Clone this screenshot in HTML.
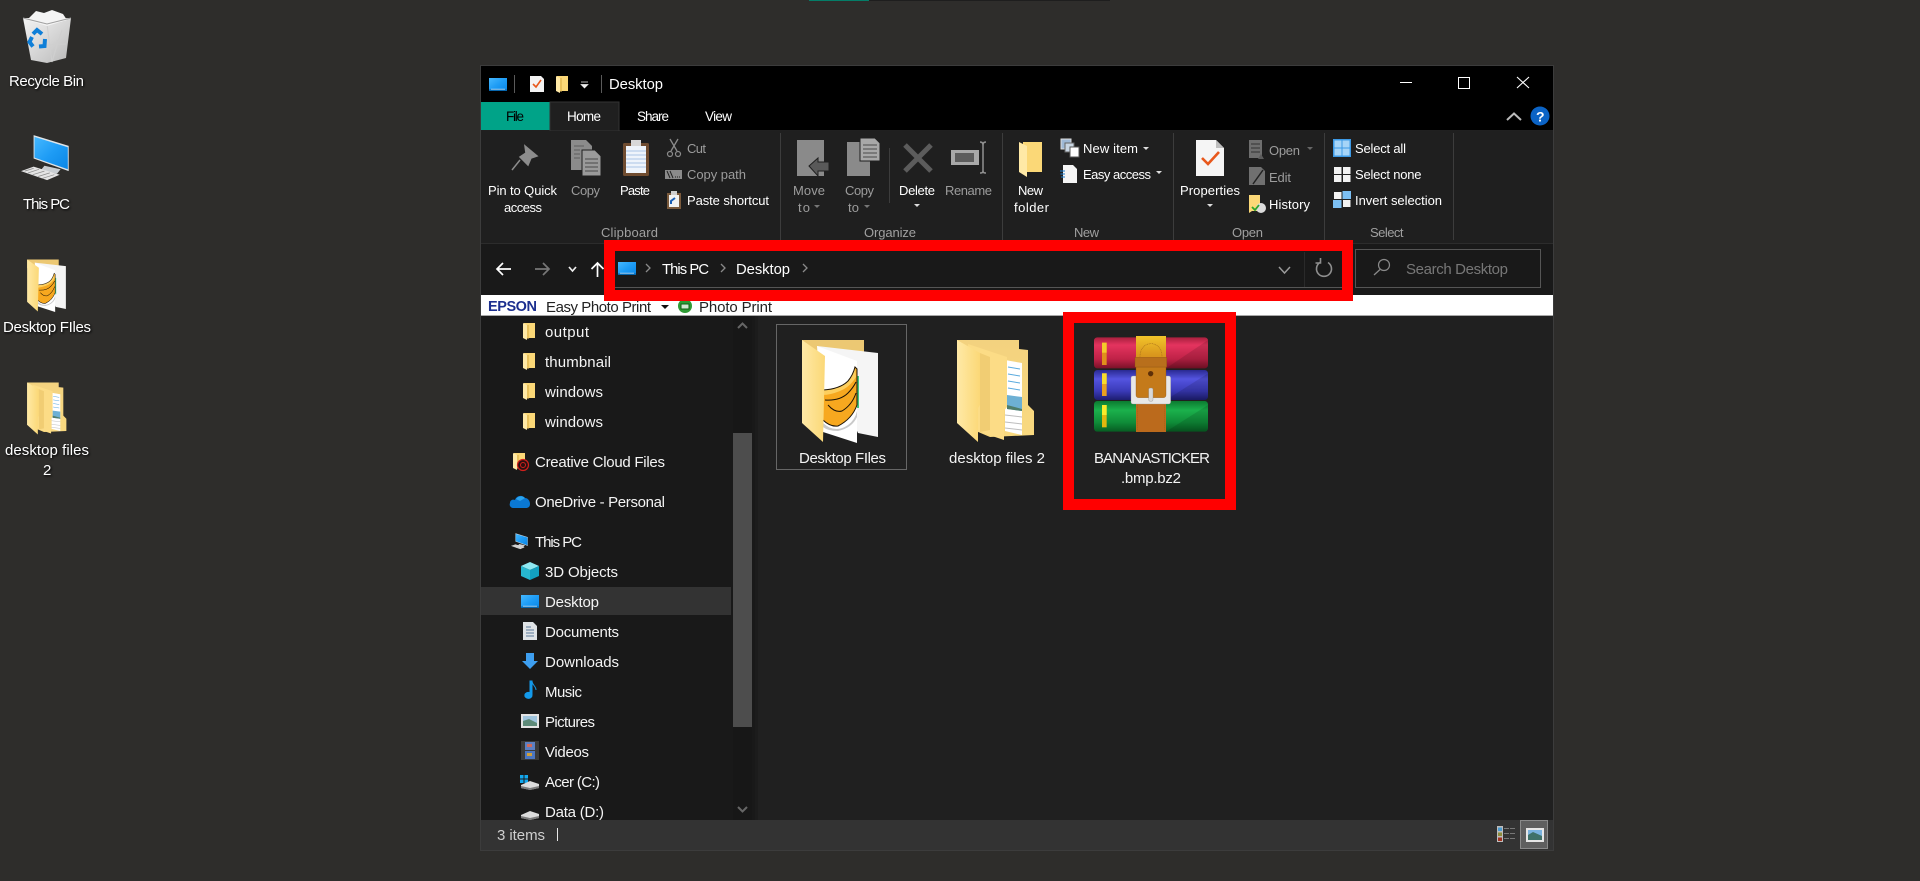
<!DOCTYPE html>
<html lang="en"><head><meta charset="utf-8"><title>Desktop</title>
<style>
html,body{margin:0;padding:0;background:#2e2d2b;width:1920px;height:881px;overflow:hidden}
svg{display:block;position:absolute;left:0;top:0}
text{font-family:"Liberation Sans",sans-serif;font-size:13px;fill:#fff}
.g{fill:#9c9c9c}.l{fill:#a0a0a0}
.n{font-size:15px;fill:#f4f4f4}
.d{font-size:15px;filter:drop-shadow(1px 1px 1px #000)}
</style></head><body>
<svg width="1920" height="881" viewBox="0 0 1920 881" xmlns="http://www.w3.org/2000/svg">
<defs>
<linearGradient id="fl" x1="0" y1="0" x2="1" y2="0"><stop offset="0" stop-color="#ffe9a6"/><stop offset="1" stop-color="#fbd877"/></linearGradient>
<linearGradient id="fb" x1="0" y1="0" x2="0" y2="1"><stop offset="0" stop-color="#f3d27f"/><stop offset="1" stop-color="#f9d97f"/></linearGradient>
<linearGradient id="gmon" x1="0" y1="0" x2="1" y2="1"><stop offset="0" stop-color="#45b8ff"/><stop offset=".5" stop-color="#1e9cf5"/><stop offset="1" stop-color="#0a86e6"/></linearGradient>
<linearGradient id="red" x1="0" y1="0" x2="0" y2="1"><stop offset="0" stop-color="#a81f3d"/><stop offset=".25" stop-color="#e4345f"/><stop offset=".7" stop-color="#bf2247"/><stop offset="1" stop-color="#7a1228"/></linearGradient>
<linearGradient id="blu" x1="0" y1="0" x2="0" y2="1"><stop offset="0" stop-color="#2a2a92"/><stop offset=".3" stop-color="#5454e0"/><stop offset=".7" stop-color="#3a3ab8"/><stop offset="1" stop-color="#1d1d70"/></linearGradient>
<linearGradient id="grn" x1="0" y1="0" x2="0" y2="1"><stop offset="0" stop-color="#0c7a30"/><stop offset=".3" stop-color="#1bb14c"/><stop offset=".7" stop-color="#0f8c38"/><stop offset="1" stop-color="#075c22"/></linearGradient>
<linearGradient id="belt" x1="0" y1="0" x2="0" y2="1"><stop offset="0" stop-color="#f2c42a"/><stop offset=".2" stop-color="#d9961d"/><stop offset=".6" stop-color="#c9741a"/><stop offset="1" stop-color="#a8561a"/></linearGradient>
<linearGradient id="bin" x1="0" y1="0" x2="1" y2="1"><stop offset="0" stop-color="#f4f4f4"/><stop offset="1" stop-color="#b9b9b9"/></linearGradient>

<symbol id="fA" viewBox="0 0 100 115">
<path d="M12 5H74V22H12Z" fill="#ecc873"/>
<path d="M27 11L88 18V102L68 98Z" fill="#f5f5f5"/>
<path d="M27 11L67 26V108L33 97Z" fill="#fff"/>
<path d="M67 41H69V73H67Z" fill="#45c27e"/>
<path d="M33 88Q45 99 58 90 65 85 67 76V82Q62 93 48 96 38 96 33 92Z" fill="#c9c9c9"/>
<path d="M33 55Q50 54 58 46 63 40 65 32L67 34V70Q62 84 48 91 40 92 33 85Z" fill="#f7a81f"/>
<path d="M33 55Q50 54 58 46 63 40 65 32L66 42Q60 52 50 56 40 60 33 60Z" fill="#fdcf5e"/>
<path d="M33 55Q50 54 58 46 63 40 65 32L67 34V70Q62 84 48 91 40 92 33 85M35 65Q50 66 58 58 63 53 66 47M38 70Q45 78 52 76 62 70 66 58" fill="none" stroke="#1b1206" stroke-width="1"/>
<path d="M12 5L35 21 33 107 12 88Z" fill="url(#fl)"/>
</symbol>

<symbol id="fB" viewBox="0 0 100 115">
<path d="M12 5H74V14L83 15V70L89 76V100L45 102 12 88Z" fill="url(#fb)"/>
<path d="M60 25L77 28V100L60 96Z" fill="#fff"/>
<path d="M63 32L75 34M63 39L75 41M63 46L75 48M63 53L75 55" stroke="#5aaade" stroke-width="1"/>
<path d="M62 60L77 62V76L62 74Z" fill="#6db0d4"/>
<path d="M62 70L77 74V76L62 74Z" fill="#4f7d6a"/>
<path d="M60 80L77 82M60 87L77 89M60 93L77 95" stroke="#bdbdbd" stroke-width="1"/>
<path d="M23 9L62 22V72L59 76V105L35 97 27 95Z" fill="#fcdc86"/>
<path d="M12 5L35 18V70L33 73V107L12 88Z" fill="url(#fl)"/>
<path d="M35 18L45 22V95L35 97Z" fill="#f1cd73"/>
</symbol>

<symbol id="sf" viewBox="0 0 12 17">
<path d="M1 0H12V15H1Z" fill="#fbd877"/><path d="M0 0L4 2V17L0 15Z" fill="#ffe9a6"/><path d="M4 2H6V15.500H4Z" fill="#e9c15c"/>
</symbol>

<symbol id="mn" viewBox="0 0 18 13">
<rect width="18" height="13" fill="url(#gmon)"/><rect x="0" y="11.500" width="18" height="1.500" fill="#0766ad"/><rect x="2" y="10.800" width="14" height=".8" fill="#bfe3ff"/>
</symbol>

<symbol id="pc" viewBox="0 0 60 52">
<path d="M14 0L53 12V40L14 26Z" fill="#dfe4e8"/>
<path d="M15 2L52 13.500V38L15 25Z" fill="url(#gmon)"/>
<path d="M26 34L44 38 40 43 22 39Z" fill="#c9ced2"/>
<path d="M0 40L14 35 43 44 29 50Z" fill="#e4e4e4"/>
<path d="M4 40L14 37M8 42L20 38M13 44L26 40M19 46L32 42M24 48L37 44" stroke="#8b8b8b" stroke-width=".8"/>
</symbol>
</defs>

<rect width="1920" height="881" fill="#2e2d2b"/>
<rect x="869" y="0" width="241" height="1" fill="#1e1e1e"/>
<rect x="809" y="0" width="60" height="1" fill="#047d68"/>

<!-- Recycle bin -->
<path d="M23 18L71 18 66 58 47 63 31 60Z" fill="url(#bin)"/>
<path d="M47 24L52 62 62 30M47 45L66 44M52 62L58 40" stroke="#cfcfcf" fill="none"/>
<path d="M27 20L36 11 44 13 52 10 63 14 67 20 47 26Z" fill="#f4f4f4"/>
<path d="M23 18L47 24 71 18" fill="none" stroke="#a0a0a0"/>
<path d="M33 34L37 30 42 34M45 39L44.500 46 39 46.500M33 46.500L29.500 42 32 37" fill="none" stroke="#0f7fd8" stroke-width="4"/>
<text class="d" x="9" y="86" textLength="75">Recycle Bin</text>
<use href="#pc" x="21" y="135" width="54" height="47"/>
<text class="d" x="23" y="209" textLength="47">This PC</text>
<use href="#fA" x="21" y="257" width="51" height="58.600"/>
<text class="d" x="3" y="332" textLength="88">Desktop FIles</text>
<use href="#fB" x="21" y="380" width="51" height="58.600"/>
<text class="d" x="5" y="455" textLength="84">desktop files</text>
<text class="d" x="43" y="475">2</text>

<!-- window -->
<rect x="480.500" y="65.500" width="1073" height="785" fill="#202020" stroke="#3c3c3c"/>
<rect x="481" y="66" width="1072" height="64" fill="#000"/>

<!-- title bar -->
<use href="#mn" x="489" y="78" width="18" height="13"/>
<rect x="514" y="75" width="1" height="18" fill="#5a5a5a"/>
<path d="M530 76H541L544 79V92H530Z" fill="#f3f3f3"/><path d="M533 84L536 87 541 80" fill="none" stroke="#e8581c" stroke-width="1.600"/>
<use href="#sf" x="556" y="76" width="12" height="17"/>
<path d="M581 82H588M581 84.500H588L584.500 88Z" fill="#eee" stroke="#eee" stroke-width=".7"/>
<rect x="601" y="75" width="1" height="18" fill="#5a5a5a"/>
<text x="609" y="89" textLength="54" style="font-size:14.800px">Desktop</text>
<rect x="1400" y="82" width="12" height="1" fill="#fff"/>
<rect x="1458.500" y="77.500" width="11" height="11" fill="none" stroke="#fff"/>
<path d="M1517 77L1529 88M1529 77L1517 88" stroke="#fff" stroke-width="1.100"/>

<!-- tabs -->
<rect x="481" y="102" width="69" height="28" fill="#00a388"/>
<path d="M550 131V102H619V131Z" fill="#1f1f1f" stroke="#333"/>
<text x="506" y="121" style="fill:#000;font-size:13.500px" textLength="18">File</text>
<text x="567" y="121" textLength="34" style="font-size:13.500px">Home</text>
<text x="637" y="121" textLength="32" style="font-size:13.500px">Share</text>
<text x="705" y="121" textLength="27" style="font-size:13.500px">View</text>
<path d="M1507 120L1514 113.500 1521 120" fill="none" stroke="#bbb" stroke-width="2"/>
<circle cx="1540" cy="116" r="9.500" fill="#0b63c5"/><text x="1536" y="121.500" style="font-size:14px;font-weight:bold">?</text>

<!-- ribbon -->
<rect x="481" y="131" width="1072" height="112" fill="#1f1f1f"/>
<rect x="481" y="243" width="1072" height="1" fill="#2c2c2c"/>
<g fill="#3c3c3c"><rect x="780" y="133" width="1" height="107"/><rect x="1002" y="133" width="1" height="107"/><rect x="1173" y="133" width="1" height="107"/><rect x="1324" y="133" width="1" height="107"/><rect x="1453" y="133" width="1" height="107"/><rect x="889" y="148" width="1" height="55"/></g>

<!-- pin -->
<path d="M525 146L537 156 531 158 528 165 520 157 526 153ZM520 160L512 170" fill="#8c8c8c" stroke="#8c8c8c" stroke-width="1.500"/>
<text x="488" y="195" textLength="69">Pin to Quick</text>
<text x="504" y="212" textLength="38">access</text>
<!-- copy -->
<path d="M571 140H586L592 146V170H571Z" fill="#8b8b8b"/><path d="M582 150H595L601 156V176H582Z" fill="#9a9a9a" stroke="#1f1f1f"/>
<path d="M585 159H598M585 163H598M585 167H598M585 171H598" stroke="#4a4a4a"/>
<path d="M574 146H584M574 150H580M574 154H580M574 158H580" stroke="#5c5c5c"/>
<text class="g" x="571" y="195" textLength="29">Copy</text>
<!-- paste -->
<rect x="623" y="143" width="26" height="33" rx="1.500" fill="#6f4c30"/><rect x="626" y="146" width="20" height="27" fill="#eef4fb"/>
<path d="M626 151H646M626 155H646M626 159H646M626 163H646M626 167H646" stroke="#a9c4e6"/>
<path d="M631 140H641V146H631Z" fill="#d8d8d8"/>
<text x="620" y="195" textLength="30">Paste</text>
<!-- scissors -->
<path d="M670 139L677 151M678 139L671 151" stroke="#8b8b8b" stroke-width="1.300"/><circle cx="670" cy="154" r="2.500" fill="none" stroke="#8b8b8b" stroke-width="1.200"/><circle cx="678" cy="154" r="2.500" fill="none" stroke="#8b8b8b" stroke-width="1.200"/>
<text class="g" x="687" y="153" textLength="19">Cut</text>
<rect x="665" y="170" width="17" height="9" fill="#8b8b8b"/><path d="M667 171L670 178M670 171L673 178" stroke="#222"/><path d="M675 177H681" stroke="#222" stroke-dasharray="1 1"/>
<text class="g" x="687" y="179" textLength="59">Copy path</text>
<rect x="667" y="193" width="14" height="16" fill="#7a5a3c"/><rect x="669" y="195" width="10" height="12" fill="#f2f2f2"/><rect x="671" y="191" width="6" height="4" fill="#cfcfcf"/><path d="M671 204L671 201 675 198" fill="none" stroke="#1a5fb5" stroke-width="2"/>
<text x="687" y="205" textLength="82">Paste shortcut</text>
<text class="l" x="601" y="237" textLength="57">Clipboard</text>

<!-- move to -->
<rect x="797" y="140" width="27" height="36" fill="#8a8a8a"/>
<path d="M809 166L818 158V162H829V171H818V176Z" fill="#595959" stroke="#1f1f1f"/>
<text class="g" x="793" y="195" textLength="32">Move</text>
<text class="g" x="798" y="212" textLength="12">to</text>
<path d="M814 205H820L817 208Z" fill="#777"/>
<!-- copy to -->
<path d="M847 142H870V176H847Z" fill="#8a8a8a"/><path d="M860 138H875L880 143V161H860Z" fill="#a8a8a8" stroke="#1f1f1f"/>
<path d="M863 145H877M863 149H877M863 153H877M863 157H877" stroke="#4a4a4a"/>
<text class="g" x="845" y="195" textLength="29">Copy</text>
<text class="g" x="848" y="212" textLength="11">to</text>
<path d="M864 205H870L867 208Z" fill="#777"/>
<!-- delete -->
<path d="M905 145L931 171M931 145L905 171" stroke="#5c5c5c" stroke-width="5"/>
<text x="899" y="195" textLength="36">Delete</text>
<path d="M914 204H920L917 207Z" fill="#ddd"/>
<!-- rename -->
<rect x="951" y="150" width="28" height="15" fill="#a8a8a8"/><rect x="955" y="153" width="19" height="9" fill="#5c5c5c"/>
<path d="M980 142C983 142 983 144 983 146V170C983 172 983 173 986 173M986 142C983 142 983 144 983 146M983 170C983 172 983 173 980 173" fill="none" stroke="#909090" stroke-width="1.500"/>
<text class="g" x="945" y="195" textLength="47">Rename</text>
<text class="l" x="864" y="237" textLength="52">Organize</text>

<!-- new -->
<path d="M1023 142H1042V172H1023Z" fill="#fbd877"/><path d="M1019 142L1027 146V177L1019 172Z" fill="#ffe9a6"/>
<text x="1018" y="195" textLength="25">New</text>
<text x="1014" y="212" textLength="35">folder</text>
<rect x="1061" y="139" width="10" height="10" fill="#9fb9d6" stroke="#ddd"/><rect x="1065" y="143" width="9" height="9" fill="#c9d6e3" stroke="#666"/><rect x="1070" y="147" width="9" height="10" fill="#fff" stroke="#555"/>
<text x="1083" y="153" textLength="55">New item</text>
<path d="M1143 147H1149L1146 150Z" fill="#ddd"/>
<path d="M1063 165H1073L1077 169V183H1063Z" fill="#f5f5f5"/><path d="M1060 171H1065M1060.500 174H1065M1061 177H1065" stroke="#1d7fd1"/>
<text x="1083" y="179" textLength="68">Easy access</text>
<path d="M1156 171H1162L1159 174Z" fill="#ddd"/>
<text class="l" x="1074" y="237" textLength="25">New</text>

<!-- open -->
<path d="M1196 140H1216L1224 148V176H1196Z" fill="#f5f5f5"/><path d="M1216 140V148H1224" fill="#bdbdbd"/>
<path d="M1202 158L1208 164 1219 152" fill="none" stroke="#e8581c" stroke-width="2.600"/>
<text x="1180" y="195" textLength="60">Properties</text>
<path d="M1207 204H1213L1210 207Z" fill="#ddd"/>
<rect x="1249" y="140" width="13" height="18" fill="#6e6e6e"/><path d="M1251 144H1260M1251 148H1260M1251 152H1260" stroke="#333"/><path d="M1258 159L1261 154 1264 159Z" fill="#5b5b5b"/>
<text class="g" x="1269" y="155" textLength="31">Open</text>
<path d="M1327 0" fill="none"/><path d="M1307 147H1313L1310 150Z" fill="#666"/>
<path d="M1249 167H1261L1265 171V185H1249Z" fill="#707070"/><path d="M1253 184L1263 170" stroke="#222" stroke-width="1.500"/>
<text class="g" x="1269" y="182" textLength="22">Edit</text>
<path d="M1249 195H1260V211H1252L1249 213Z" fill="#fbd877"/><circle cx="1261" cy="208" r="5" fill="#dcdcdc"/><path d="M1252 207L1255 210 1259 205" fill="none" stroke="#2aa52a" stroke-width="1.800"/>
<text x="1269" y="209" textLength="41">History</text>
<text class="l" x="1232" y="237" textLength="31">Open</text>

<!-- select -->
<rect x="1333" y="139" width="18" height="18" fill="#3d9ae6"/><g fill="#a6d4f7"><rect x="1334.500" y="140.500" width="7" height="7"/><rect x="1342.500" y="140.500" width="7" height="7"/><rect x="1334.500" y="148.500" width="7" height="7"/><rect x="1342.500" y="148.500" width="7" height="7"/></g>
<text x="1355" y="153" textLength="51">Select all</text>
<g fill="#f2f2f2"><rect x="1334" y="167" width="7.500" height="7"/><rect x="1343" y="167" width="7.500" height="7"/><rect x="1334" y="175" width="7.500" height="7"/><rect x="1343" y="175" width="7.500" height="7"/></g>
<text x="1355" y="179" textLength="66.500">Select none</text>
<g fill="#f2f2f2"><rect x="1334" y="192" width="7.500" height="7"/><rect x="1343" y="200" width="7.500" height="7"/></g><g fill="#7cc0f4"><rect x="1342.500" y="191" width="8.500" height="8"/><rect x="1333" y="200" width="8.500" height="8"/></g>
<text x="1355" y="205" textLength="87">Invert selection</text>
<text class="l" x="1370" y="237" textLength="33.500">Select</text>

<!-- nav bar -->
<rect x="481" y="244" width="1072" height="51" fill="#191919"/>
<path d="M511 269H497M503 263L497 269 503 275" fill="none" stroke="#fff" stroke-width="1.700"/>
<path d="M535 269H549M543 263L549 269 543 275" fill="none" stroke="#777" stroke-width="1.700"/>
<path d="M569 267L572.500 271 576 267" fill="none" stroke="#eee" stroke-width="1.700"/>
<path d="M597.500 277V263M591.500 269L597.500 263 603.500 269" fill="none" stroke="#fff" stroke-width="1.700"/>
<rect x="615" y="251" width="727" height="37" fill="#191919"/>
<rect x="615" y="287" width="727" height="1" fill="#555"/>
<use href="#mn" x="618" y="262" width="18" height="13"/>
<path d="M646 264L650 268 646 272M721 264L725 268 721 272M803 264L807 268 803 272" fill="none" stroke="#8a8a8a" stroke-width="1.300"/>
<text x="662" y="274" textLength="47" style="font-size:14.800px">This PC</text>
<text x="736" y="274" textLength="54" style="font-size:14.800px">Desktop</text>
<path d="M1279 267L1284.500 273 1290 267" fill="none" stroke="#9a9a9a" stroke-width="1.500"/>
<rect x="1304" y="252" width="1" height="35" fill="#2a2a2a"/>
<path d="M1320 262.500A7.500 7.500 0 1 0 1328 262.500M1320.500 258V263H1315.500" fill="none" stroke="#8f8f8f" stroke-width="1.600"/>
<rect x="1355.500" y="249.500" width="185" height="38" fill="#191919" stroke="#555"/>
<circle cx="1384" cy="265" r="5.500" fill="none" stroke="#8a8a8a" stroke-width="1.200"/><path d="M1380 269.500L1374 275" stroke="#8a8a8a" stroke-width="1.300"/>
<text x="1406" y="274" textLength="102" style="fill:#777;font-size:15px">Search Desktop</text>

<!-- Epson bar -->
<rect x="481" y="295" width="1072" height="20" fill="#fff"/>
<rect x="481" y="315" width="1072" height="1" fill="#a8a8a8"/>
<text x="488" y="311" textLength="49" style="fill:#1c2f8f;font-size:14.500px;font-weight:bold">EPSON</text>
<text x="546" y="312" textLength="105" style="fill:#222;font-size:15px">Easy Photo Print</text>
<path d="M661 305H669L665 309Z" fill="#111"/>
<circle cx="685" cy="306" r="7" fill="#2f9b35"/><rect x="681" y="304" width="8" height="5" fill="#cfe8cf" stroke="#0e5f14"/>
<text x="699" y="312" textLength="73" style="fill:#222;font-size:15px">Photo Print</text>

<!-- nav pane -->
<rect x="481" y="316" width="274" height="504" fill="#191919"/>
<rect x="755" y="316" width="3" height="504" fill="#1c1c1c"/>
<rect x="733" y="316" width="19" height="504" fill="#171717"/>
<rect x="733" y="433" width="19" height="294" fill="#4d4d4d"/>
<path d="M738 328L742.500 323.500 747 328M738 807L742.500 811.500 747 807" fill="none" stroke="#666" stroke-width="2"/>
<rect x="481" y="587" width="250" height="28" fill="#333"/>

<use href="#sf" x="523" y="323" width="12" height="17"/>
<use href="#sf" x="523" y="353" width="12" height="17"/>
<use href="#sf" x="523" y="383" width="12" height="17"/>
<use href="#sf" x="523" y="413" width="12" height="17"/>
<text class="n" x="545" y="337" textLength="44">output</text>
<text class="n" x="545" y="367" textLength="66">thumbnail</text>
<text class="n" x="545" y="397" textLength="58">windows</text>
<text class="n" x="545" y="427" textLength="58">windows</text>
<use href="#sf" x="513" y="453" width="12" height="17"/>
<circle cx="523" cy="465" r="5.500" fill="#2a1010" stroke="#d0201c" stroke-width="1.200"/><circle cx="523" cy="465" r="2.500" fill="none" stroke="#d0201c"/>
<text class="n" x="535" y="467" textLength="130">Creative Cloud Files</text>
<path d="M513 508A3.500 3.500 0 0 1 510 503C510 500 513 499 515 500 516 496 522 494 525 498 528 498 530 501 530 504 530 507 528 508 526 508Z" fill="#0a78d4"/><path d="M516 499C518 496 522 495 525 498L520 501Z" fill="#2aa4ef"/>
<text class="n" x="535" y="507" textLength="130">OneDrive - Personal</text>
<use href="#pc" x="511" y="533" width="19" height="17"/>
<text class="n" x="535" y="547" textLength="47">This PC</text>
<path d="M530 562L539 566 530 570 521 566Z" fill="#8fe9f2"/><path d="M521 566L530 570V580L521 576Z" fill="#27b7cf"/><path d="M539 566L530 570V580L539 576Z" fill="#13a0bf"/>
<text class="n" x="545" y="577" textLength="73">3D Objects</text>
<use href="#mn" x="521" y="595" width="18" height="13"/>
<text class="n" x="545" y="607" textLength="54">Desktop</text>
<path d="M523 622H533L537 626V640H523Z" fill="#dfe3e6"/><path d="M526 627H531M526 630H534M526 633H534M526 636H534" stroke="#5b7a99"/>
<text class="n" x="545" y="637" textLength="74">Documents</text>
<path d="M526 653H534V661H538L530 669 522 661H526Z" fill="#3e9ff0"/>
<text class="n" x="545" y="667" textLength="74">Downloads</text>
<path d="M532 681V695A3.600 3 0 1 1 529.500 692.500H530V681ZM532 681C532 685 536 686 536 690" fill="#1399ea" stroke="#1399ea"/>
<text class="n" x="545" y="697" textLength="37">Music</text>
<rect x="521" y="714" width="18" height="14" fill="#e3e3e3"/><rect x="523" y="716" width="14" height="10" fill="#9fc4dd"/><path d="M523 721L529 719 537 723V726H523Z" fill="#5d8a78"/>
<text class="n" x="545" y="727" textLength="50">Pictures</text>
<rect x="521" y="741" width="18" height="19" fill="#3a3a3a"/><rect x="525" y="742" width="10" height="8" fill="#5d7fc1"/><rect x="525" y="751" width="10" height="8" fill="#4c76c0"/><rect x="527" y="744" width="5" height="3" fill="#d06a5a"/><rect x="527" y="753" width="5" height="3" fill="#d0a03a"/>
<text class="n" x="545" y="757" textLength="44">Videos</text>
<g fill="#12a8ee"><rect x="520" y="775" width="3.500" height="3.500"/><rect x="524.500" y="775" width="3.500" height="3.500"/><rect x="520" y="779.500" width="3.500" height="3.500"/><rect x="524.500" y="779.500" width="3.500" height="3.500"/></g>
<path d="M521 785L530 781 539 784V788L530 790 521 788Z" fill="#dcdcdc"/><path d="M521 786L530 788 539 786V788L530 790 521 788Z" fill="#7b7b7b"/>
<text class="n" x="545" y="787" textLength="55">Acer (C:)</text>
<path d="M521 815L530 811 539 814V818L530 820 521 818Z" fill="#dcdcdc"/><path d="M521 816L530 818 539 816V818L530 820 521 818Z" fill="#7b7b7b"/>
<text class="n" x="545" y="817" textLength="59">Data (D:)</text>

<!-- content -->
<rect x="758" y="316" width="795" height="504" fill="#202020"/>
<rect x="776.500" y="324.500" width="130" height="145" fill="#202020" stroke="#666"/>
<use href="#fA" x="790" y="335" width="100" height="115"/>
<text class="n" x="799" y="463" textLength="87">Desktop FIles</text>
<use href="#fB" x="945" y="335" width="100" height="115"/>
<text class="n" x="949" y="463" textLength="96">desktop files 2</text>

<!-- winrar -->
<g transform="translate(1080 320) scale(.33333)">
<rect x="42" y="52" width="342" height="93" rx="10" fill="url(#red)"/>
<rect x="42" y="150" width="342" height="90" rx="10" fill="url(#blu)"/>
<rect x="42" y="243" width="342" height="92" rx="10" fill="url(#grn)"/>
<path d="M258 145L384 60V135Q384 145 374 145ZM258 240L384 160V230Q384 240 374 240ZM258 335L384 255V325Q384 335 374 335Z" fill="#000" opacity=".12"/>
<rect x="66" y="68" width="14" height="67" fill="#e08f1c"/><rect x="66" y="68" width="14" height="30" fill="#f4cb2a"/>
<rect x="66" y="160" width="14" height="68" fill="#e8a020"/><rect x="66" y="160" width="14" height="32" fill="#f7dc2e"/>
<rect x="66" y="255" width="14" height="67" fill="#e2b80e"/><rect x="66" y="255" width="14" height="30" fill="#f9ec2b"/>
<rect x="168" y="48" width="90" height="288" fill="url(#belt)"/>
<rect x="168" y="240" width="90" height="96" fill="#bb6a1c"/>
<path d="M172 250V330M254 250V330" stroke="#8a4e12" stroke-dasharray="3 3"/>
<path d="M180 110C180 58 246 58 246 110" fill="none" stroke="#a9701a" stroke-width="2" stroke-dasharray="3 2"/>
<rect x="153" y="168" width="119" height="84" rx="6" fill="#e8e8e8" stroke="#9a9a9a"/>
<path d="M168 141H258V225Q258 233 250 233H176Q168 233 168 225Z" fill="#c47a1a" stroke="#8a4e12"/>
<rect x="165" y="112" width="95" height="29" fill="#b86f1c" stroke="#8a4e12"/>
<circle cx="212" cy="161" r="8" fill="#5d2f08"/>
<rect x="206" y="204" width="13" height="40" rx="5" fill="#d8d8d8" stroke="#8a8a8a"/>
</g>
<text class="n" x="1094" y="463" textLength="116">BANANASTICKER</text>
<text class="n" x="1121" y="483" textLength="60">.bmp.bz2</text>

<!-- status -->
<rect x="481" y="820" width="1072" height="30" fill="#333"/>
<text x="497" y="840" textLength="48" style="fill:#cfcfcf;font-size:15px">3 items</text>
<rect x="557" y="828" width="1" height="13" fill="#e8e8e8"/>
<g><rect x="1497" y="826" width="6" height="16" fill="#bdbdbd"/><rect x="1498" y="827.500" width="4" height="3.500" fill="#4a9bd0"/><rect x="1498" y="832.500" width="4" height="3.500" fill="#8c8c3a"/><rect x="1498" y="837.500" width="4" height="3.500" fill="#a0301e"/>
<path d="M1504 828.500H1509M1510 828.500H1515M1504 833.500H1509M1510 833.500H1515M1504 838.500H1509M1510 838.500H1515" stroke="#777"/></g>
<rect x="1520.500" y="820.500" width="27" height="28" fill="#5f5f5f" stroke="#8a8a8a"/>
<rect x="1526" y="828" width="18" height="14" fill="#e6e6e6"/><rect x="1528" y="830" width="14" height="10" fill="#7ab2de"/><path d="M1528 835L1533 832 1542 836V840H1528Z" fill="#3f7168"/>

<!-- red annotation frames -->
<path fill="#ff0000" fill-rule="evenodd" d="M604 240H1353V301H604ZM615 251V290H1342V251Z"/>
<path fill="#ff0000" fill-rule="evenodd" d="M1063 312H1236V510H1063ZM1074 323V499H1225V323Z"/>
</svg>
</body></html>
